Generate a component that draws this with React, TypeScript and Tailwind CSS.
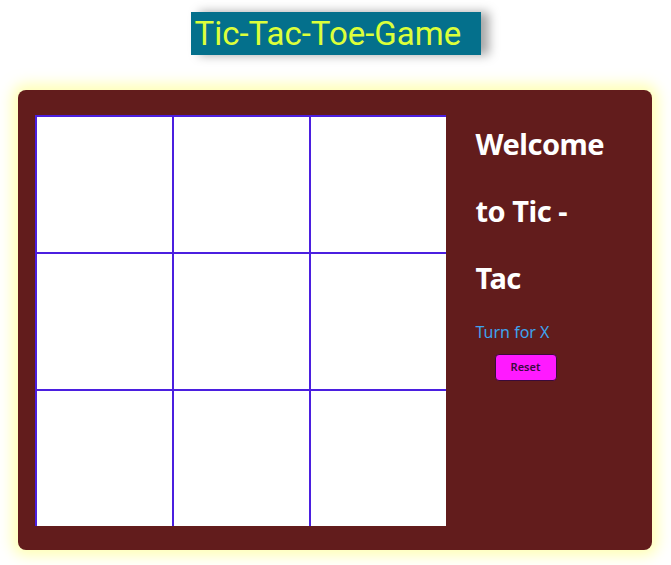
import React, { useState } from 'react';

export default function App() {
  const [cells, setCells] = useState<string[]>(Array(9).fill(''));
  const [turn, setTurn] = useState('X');

  const play = (i: number) => {
    if (cells[i]) return;
    const next = [...cells];
    next[i] = turn;
    setCells(next);
    setTurn(turn === 'X' ? 'O' : 'X');
  };

  const reset = () => {
    setCells(Array(9).fill(''));
    setTurn('X');
  };

  return (
    <div className="w-[671px] h-[565px] bg-white overflow-hidden flex flex-col items-center" style={{ fontFamily: '"Noto Sans", sans-serif' }}>
      {/* Title */}
      <div className="mt-[12px] w-[290px] h-[43px] bg-[#04708c] shadow-[8px_0_10px_rgba(0,0,0,0.35)] flex items-center pl-[4px]">
        <span className="text-[#dcff3a] text-[33px] leading-none" style={{ fontFamily: 'Roboto, sans-serif' }}>
          Tic-Tac-Toe-Game
        </span>
      </div>

      {/* Game panel */}
      <div className="mt-[35px] ml-[-2px] w-[634px] h-[460px] bg-[#621c1c] rounded-lg shadow-[0_0_14px_6px_rgba(255,255,150,0.7)] flex pl-[17px] pt-[25px]">
        <div className="grid grid-cols-[repeat(3,135px)] grid-rows-[repeat(3,135px)] gap-[2px] bg-[#4b1fe0] p-[2px] w-[411px] h-[411px]">
          {cells.map((c, i) => (
            <button
              key={i}
              onClick={() => play(i)}
              className="bg-white flex items-center justify-center text-[64px] font-bold text-[#621c1c]"
            >
              {c}
            </button>
          ))}
        </div>

        <div className="ml-[30px] w-[135px] mt-[-5px]">
          <h1 className="text-white text-[29px] font-bold leading-[67px] tracking-[-0.5px]">
            Welcome to Tic - Tac
          </h1>
          <div className="text-[#3ea3ee] text-[16px] mt-[11px] leading-[20px]">Turn for {turn}</div>
          <button
            onClick={reset}
            className="mt-[12px] ml-[19px] w-[62px] h-[27px] bg-[#ff1aff] rounded-[4px] border border-[#3a0a3a] text-[#3a0a40] text-[11px] font-semibold"
          >
            Reset
          </button>
        </div>
      </div>
    </div>
  );
}
